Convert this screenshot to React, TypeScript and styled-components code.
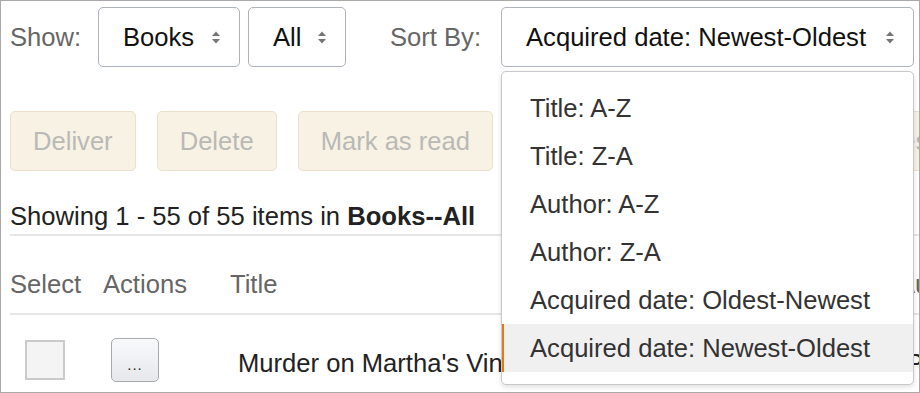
import React from 'react';
import styled, { createGlobalStyle } from 'styled-components';

const GlobalStyle = createGlobalStyle`
  html, body {
    margin: 0;
    padding: 0;
    background: #ffffff;
  }
  body {
    font-family: 'Liberation Sans', Arial, Helvetica, sans-serif;
    font-size: 25.6px;
  }
`;

const SORT_OPTIONS = [
  'Title: A-Z',
  'Title: Z-A',
  'Author: A-Z',
  'Author: Z-A',
  'Acquired date: Oldest-Newest',
  'Acquired date: Newest-Oldest',
];

const ACTIONS = ['Deliver', 'Delete', 'Mark as read', 'Mark as unread', 'Clear furthest page read'];

const SelectArrows: React.FC = () => (
  <svg width="8" height="13" viewBox="0 0 8 13">
    <polygon points="0,5 4,0.5 8,5" fill="#757575" />
    <polygon points="0,8 8,8 4,12.5" fill="#757575" />
  </svg>
);

const App: React.FC = () => {
  const selected = SORT_OPTIONS.length - 1;

  return (
    <>
      <GlobalStyle />
      <StyledFrame>
        <StyledToolbar>
          <StyledLabel>Show:</StyledLabel>
          <StyledSelect width={142}>
            <span>Books</span>
            <SelectArrows />
          </StyledSelect>
          <StyledSelect width={98}>
            <span>All</span>
            <SelectArrows />
          </StyledSelect>
          <StyledLabel spaced>Sort By:</StyledLabel>
          <StyledSortWrap>
            <StyledSelect width={413}>
              <span>{SORT_OPTIONS[selected]}</span>
              <SelectArrows />
            </StyledSelect>
            <StyledMenu>
              {SORT_OPTIONS.map((option, i) => (
                <StyledMenuItem key={option} active={i === selected}>
                  {option}
                </StyledMenuItem>
              ))}
            </StyledMenu>
          </StyledSortWrap>
        </StyledToolbar>

        <StyledActions>
          {ACTIONS.map(action => (
            <StyledActionButton key={action} disabled>
              {action}
            </StyledActionButton>
          ))}
        </StyledActions>

        <StyledSummary>
          Showing 1 - 55 of 55 items in <b>Books--All</b>
        </StyledSummary>

        <StyledHeaderRow>
          <StyledHeadCell>Select</StyledHeadCell>
          <StyledHeadCell>Actions</StyledHeadCell>
          <StyledHeadCell>Title</StyledHeadCell>
          <StyledHeadCell>Author</StyledHeadCell>
        </StyledHeaderRow>

        <StyledItemRow>
          <StyledCheckCell>
            <StyledCheckbox />
          </StyledCheckCell>
          <StyledActionCell>
            <StyledDotsButton>...</StyledDotsButton>
          </StyledActionCell>
          <StyledTitleCell>Murder on Martha's Vineyard</StyledTitleCell>
          <StyledTitleCell>Philip R. Craig</StyledTitleCell>
        </StyledItemRow>
      </StyledFrame>
    </>
  );
};

const StyledFrame = styled.div`
  position: relative;
  box-sizing: border-box;
  width: 920px;
  height: 393px;
  padding: 6px 0 0 9px;
  border: 1px solid #a9a9a9;
  overflow: hidden;
  background: #ffffff;
`;

const StyledToolbar = styled.div`
  display: flex;
  align-items: center;
  height: 60px;
  white-space: nowrap;
`;

const StyledLabel = styled.span<{ spaced?: boolean }>`
  flex-shrink: 0;
  color: #666666;
  margin-left: ${p => (p.spaced ? '36px' : '0')};
  margin-right: ${p => (p.spaced ? '20px' : '0')};
  width: ${p => (p.spaced ? 'auto' : '88px')};
`;

const StyledSelect = styled.div<{ width: number }>`
  box-sizing: border-box;
  flex-shrink: 0;
  display: flex;
  align-items: center;
  justify-content: space-between;
  width: ${p => p.width}px;
  height: 60px;
  padding: 0 19px 0 24px;
  margin-right: 8px;
  border: 1px solid #adb3bc;
  border-radius: 5px;
  color: #111111;
  background: #ffffff;

  svg {
    flex-shrink: 0;
  }
`;

const StyledSortWrap = styled.div`
  position: relative;
  flex-shrink: 0;
  width: 413px;

  ${StyledSelect} {
    margin-right: 0;
  }
`;

const StyledMenu = styled.ul`
  position: absolute;
  top: 64px;
  left: 0;
  right: 0;
  box-sizing: border-box;
  height: 314px;
  margin: 0;
  padding: 12px 0;
  list-style: none;
  background: #ffffff;
  border: 1px solid #c9c9c9;
  border-radius: 5px;
  box-shadow: 0 2px 5px rgba(0, 0, 0, 0.13);
  z-index: 2;
`;

const StyledMenuItem = styled.li<{ active?: boolean }>`
  height: 48px;
  line-height: 48px;
  padding-left: 26px;
  border-left: 2px solid ${p => (p.active ? '#e47911' : 'transparent')};
  background: ${p => (p.active ? '#f0f0f0' : 'transparent')};
  color: #333333;
`;

const StyledActions = styled.div`
  display: flex;
  gap: 21px;
  margin-top: 44px;
  white-space: nowrap;
`;

const StyledActionButton = styled.button`
  box-sizing: border-box;
  height: 60px;
  padding: 0 22px;
  font: inherit;
  color: #b9b9b6;
  background: #f8f2e5;
  border: 1px solid #ece2cc;
  border-radius: 5px;
  flex-shrink: 0;
`;

const StyledSummary = styled.div`
  margin-top: 30px;
  padding-bottom: 3px;
  line-height: 30px;
  color: #222222;
  border-bottom: 2px solid #e6e6e6;
  white-space: nowrap;

  b {
    font-weight: 700;
  }
`;

const StyledHeaderRow = styled.div`
  display: grid;
  grid-template-columns: 93px 127px 668px 200px;
  padding: 33px 0 14px;
  line-height: 30px;
  border-bottom: 2px solid #e6e6e6;
  white-space: nowrap;
`;

const StyledHeadCell = styled.div`
  color: #666666;
`;

const StyledItemRow = styled.div`
  display: grid;
  grid-template-columns: 93px 127px 668px 200px;
  align-items: center;
  padding-top: 23px;
  white-space: nowrap;
`;

const StyledCheckCell = styled.div`
  padding-left: 15px;
`;

const StyledCheckbox = styled.div`
  box-sizing: border-box;
  width: 40px;
  height: 40px;
  border: 2px solid #cbcbcb;
  background: #f4f4f4;
`;

const StyledActionCell = styled.div`
  padding-left: 8px;
`;

const StyledDotsButton = styled.button`
  box-sizing: border-box;
  width: 48px;
  height: 44px;
  padding: 8px 0 0;
  font-family: 'Liberation Sans', Arial, sans-serif;
  font-size: 15px;
  font-weight: 400;
  letter-spacing: 1px;
  color: #222222;
  border: 1px solid #a7a9ad;
  border-radius: 5px;
  background: linear-gradient(#f8f9fb, #e6e8eb);
`;

const StyledTitleCell = styled.div`
  padding-left: 8px;
  padding-top: 5px;
  line-height: 30px;
  color: #222222;
  overflow: hidden;
`;

export default App;
